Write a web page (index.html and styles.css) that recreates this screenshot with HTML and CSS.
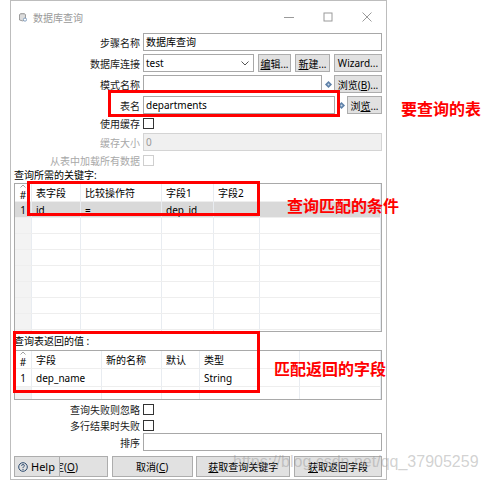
FILE: index.html
```html
<!DOCTYPE html>
<html>

<head>
    <meta http-equiv="Content-Type" content="text/html;charset=UTF-8" />
    <title>数据库查询</title>
    <link rel="stylesheet" href="styles.css">
</head>

<body>
    <div class="page">
        <div class="dialog">
            <div class="title_bar">
                <svg class="title_icon" width="8" height="9" viewBox="0 0 8 9">
                    <ellipse cx="3.5" cy="1.8" rx="3" ry="1.3" fill="#c9c9c9" stroke="#8a8a8a" stroke-width="0.8"/>
                    <path d="M0.5 1.8 V7 Q3.5 8.8 6.5 7 V1.8" fill="#dcdcdc" stroke="#8a8a8a" stroke-width="0.8"/>
                    <circle cx="6" cy="6.6" r="1.6" fill="#fff" stroke="#6f8fb5" stroke-width="0.8"/>
                </svg>
                <span class="title_text">数据库查询</span>
                <div class="win_btns">
                    <span class="win_btn"><svg width="10" height="10" viewBox="0 0 10 10"><path d="M0 5.5 H10" stroke="#9a9a9a" stroke-width="1"/></svg></span>
                    <span class="win_btn"><svg width="10" height="10" viewBox="0 0 10 10"><rect x="1" y="1" width="8" height="8" fill="none" stroke="#9a9a9a" stroke-width="1"/></svg></span>
                    <span class="win_btn"><svg width="10" height="10" viewBox="0 0 10 10"><path d="M0.5 0.5 L9.5 9.5 M9.5 0.5 L0.5 9.5" stroke="#9a9a9a" stroke-width="1"/></svg></span>
                </div>
            </div>

            <div class="dialog_body">
                <div class="form_row first">
                    <span class="label">步骤名称</span>
                    <div class="field"><div class="input">数据库查询</div></div>
                </div>
                <div class="form_row">
                    <span class="label">数据库连接</span>
                    <div class="field gap">
                        <div class="input select"><span>test</span>
                            <svg width="8" height="5" viewBox="0 0 8 5"><path d="M0.5 0.5 L4 4 L7.5 0.5" fill="none" stroke="#555" stroke-width="1"/></svg>
                        </div>
                        <button class="btn btn_edit"><u>编</u>辑...</button>
                        <button class="btn btn_new"><u>新</u>建...</button>
                        <button class="btn btn_wizard">Wizard...</button>
                    </div>
                </div>
                <div class="form_row">
                    <span class="label">模式名称</span>
                    <div class="field">
                        <div class="input"></div>
                        <span class="var_icon"><svg width="7" height="7" viewBox="0 0 7 7"><path d="M3.5 0 L7 3.5 L3.5 7 L0 3.5 Z" fill="#5d80a8"/><circle cx="3.5" cy="3.5" r="1" fill="#c9d8ea"/></svg></span>
                        <button class="btn btn_browse_b">浏览(<u>B</u>)...</button>
                    </div>
                </div>
                <div class="form_row">
                    <span class="label">表名</span>
                    <div class="field">
                        <div class="input">departments</div>
                        <span class="var_icon"><svg width="7" height="7" viewBox="0 0 7 7"><path d="M3.5 0 L7 3.5 L3.5 7 L0 3.5 Z" fill="#5d80a8"/><circle cx="3.5" cy="3.5" r="1" fill="#c9d8ea"/></svg></span>
                        <button class="btn btn_browse">浏<u>览</u>...</button>
                    </div>
                </div>
                <div class="check_row">
                    <span class="label">使用缓存</span>
                    <div class="field"><span class="checkbox"></span></div>
                </div>
                <div class="form_row">
                    <span class="label disabled">缓存大小</span>
                    <div class="field"><div class="input input_disabled">0</div></div>
                </div>
                <div class="check_row">
                    <span class="label disabled">从表中加载所有数据</span>
                    <div class="field"><span class="checkbox checkbox_disabled"></span></div>
                </div>

                <div class="section_title keys_title">查询所需的关键字:</div>
                <div class="grid_table keys_table">
                    <div class="grid_row head">
                        <div class="cell num"><svg class="sort_mark" width="6" height="4" viewBox="0 0 6 4"><path d="M0.5 3.5 L3 1 L5.5 3.5" fill="none" stroke="#8a8a8a" stroke-width="0.8"/></svg>#</div>
                        <div class="cell">表字段</div>
                        <div class="cell">比较操作符</div>
                        <div class="cell">字段1</div>
                        <div class="cell">字段2</div>
                        <div class="cell"></div>
                    </div>
                    <div class="grid_row selected">
                        <div class="cell num">1</div>
                        <div class="cell">id</div>
                        <div class="cell">=</div>
                        <div class="cell">dep_id</div>
                        <div class="cell"></div>
                        <div class="cell"></div>
                    </div>
                    <div class="grid_row"><div class="cell num"></div><div class="cell"></div><div class="cell"></div><div class="cell"></div><div class="cell"></div><div class="cell"></div></div>
                    <div class="grid_row"><div class="cell num"></div><div class="cell"></div><div class="cell"></div><div class="cell"></div><div class="cell"></div><div class="cell"></div></div>
                    <div class="grid_row"><div class="cell num"></div><div class="cell"></div><div class="cell"></div><div class="cell"></div><div class="cell"></div><div class="cell"></div></div>
                    <div class="grid_row"><div class="cell num"></div><div class="cell"></div><div class="cell"></div><div class="cell"></div><div class="cell"></div><div class="cell"></div></div>
                    <div class="grid_row"><div class="cell num"></div><div class="cell"></div><div class="cell"></div><div class="cell"></div><div class="cell"></div><div class="cell"></div></div>
                    <div class="grid_row"><div class="cell num"></div><div class="cell"></div><div class="cell"></div><div class="cell"></div><div class="cell"></div><div class="cell"></div></div>
                    <div class="grid_row"><div class="cell num"></div><div class="cell"></div><div class="cell"></div><div class="cell"></div><div class="cell"></div><div class="cell"></div></div>
                    <div class="grid_row"><div class="cell num"></div><div class="cell"></div><div class="cell"></div><div class="cell"></div><div class="cell"></div><div class="cell"></div></div>
                </div>

                <div class="section_title">查询表返回的值 :</div>
                <div class="grid_table return_table">
                    <div class="grid_row head">
                        <div class="cell num"><svg class="sort_mark" width="6" height="4" viewBox="0 0 6 4"><path d="M0.5 3.5 L3 1 L5.5 3.5" fill="none" stroke="#8a8a8a" stroke-width="0.8"/></svg>#</div>
                        <div class="cell">字段</div>
                        <div class="cell">新的名称</div>
                        <div class="cell">默认</div>
                        <div class="cell">类型</div>
                        <div class="cell"></div>
                    </div>
                    <div class="grid_row tall">
                        <div class="cell num">1</div>
                        <div class="cell">dep_name</div>
                        <div class="cell"></div>
                        <div class="cell"></div>
                        <div class="cell">String</div>
                        <div class="cell"></div>
                    </div>
                    <div class="grid_row"><div class="cell num"></div><div class="cell"></div><div class="cell"></div><div class="cell"></div><div class="cell"></div><div class="cell"></div></div>
                </div>

                <div class="check_row after_table">
                    <span class="label">查询失败则忽略</span>
                    <div class="field"><span class="checkbox"></span></div>
                </div>
                <div class="check_row">
                    <span class="label">多行结果时失败</span>
                    <div class="field"><span class="checkbox"></span></div>
                </div>
                <div class="form_row sort_row">
                    <span class="label">排序</span>
                    <div class="field"><div class="input"></div></div>
                </div>

                <div class="button_bar">
                    <button class="btn btn_ok">确定(<u>O</u>)</button>
                    <button class="btn btn_cancel">取消(<u>C</u>)</button>
                    <button class="btn btn_keys"><u>获</u>取查询关键字</button>
                    <button class="btn btn_fields"><u>获</u>取返回字段</button>
                    <button class="btn btn_help">
                        <svg width="10" height="10" viewBox="0 0 10 10"><circle cx="5" cy="5" r="4.3" fill="none" stroke="#2b4a6f" stroke-width="1"/><path d="M3.6 3.9 Q3.6 2.5 5 2.5 Q6.4 2.5 6.4 3.8 Q6.4 4.6 5.4 5 Q5 5.2 5 6" fill="none" stroke="#2b4a6f" stroke-width="0.9"/><circle cx="5" cy="7.4" r="0.55" fill="#2b4a6f"/></svg>
                        Help
                    </button>
                </div>
            </div>
        </div>

        <div class="mark mark_table_name"></div>
        <div class="mark mark_keys"></div>
        <div class="mark mark_return"></div>
        <div class="note note_table">要查询的表</div>
        <div class="note note_keys">查询匹配的条件</div>
        <div class="note note_return">匹配返回的字段</div>
        <div class="watermark">https://blog.csdn.net/qq_37905259</div>
    </div>
</body>

</html>
```

FILE: styles.css
```css
* {
    margin: 0;
    padding: 0;
    box-sizing: border-box;
}

html {
    background: #fff;
}

body {
    font-family: "Noto Sans", "Noto Sans CJK SC", sans-serif;
    font-size: 10px;
    color: #000;
}

.page {
    position: relative;
    width: 488px;
    height: 480px;
    overflow: hidden;
}

.dialog {
    margin-left: 10px;
    width: 377px;
    height: 480px;
    border: 1px solid #bdbdbd;
    background: #fff;
    display: flex;
    flex-direction: column;
}

/* 标题栏 */
.title_bar {
    height: 32px;
    display: flex;
    align-items: center;
    padding-left: 8px;
}

.title_icon {
    margin-right: 6px;
}

.title_text {
    color: #9a9a9a;
}

.win_btns {
    margin-left: auto;
    display: flex;
    height: 100%;
}

.win_btn {
    width: 39px;
    display: flex;
    align-items: center;
    justify-content: center;
}

/* 表单 */
.dialog_body {
    padding: 0 4px 0 3px;
    display: flex;
    flex-direction: column;
}

.form_row,
.check_row {
    display: grid;
    grid-template-columns: 126px 1fr;
    column-gap: 3px;
    align-items: center;
}

.form_row {
    height: 18px;
    margin-top: 3px;
}

.form_row.first {
    margin-top: 0;
}

.check_row {
    height: 14px;
    margin-top: 2px;
}

.check_row.after_table {
    margin-top: 2px;
}

.form_row.sort_row {
    margin-top: 1px;
}

.label {
    text-align: right;
    white-space: nowrap;
    color: #1a1a1a;
}

.label.disabled {
    color: #a8a8a8;
}

.field {
    display: flex;
    align-items: center;
    height: 100%;
}

.field.gap {
    gap: 4px;
}

.input {
    flex: 1;
    height: 18px;
    border: 1px solid #a8a8a8;
    background: #fff;
    padding: 0 2px;
    line-height: 16px;
    white-space: nowrap;
    overflow: hidden;
}

.input_disabled {
    background: #f0f0f0;
    border-color: #d4d4d4;
    color: #9a9a9a;
}

.select {
    display: flex;
    align-items: center;
    justify-content: space-between;
    padding-right: 4px;
}

.var_icon {
    width: 12px;
    display: flex;
    align-items: center;
    justify-content: center;
}

.checkbox {
    width: 11px;
    height: 11px;
    border: 1px solid #333;
    background: #fff;
}

.checkbox_disabled {
    border-color: #cfcfcf;
}

.btn {
    font: inherit;
    height: 18px;
    border: 1px solid #adadad;
    background: #e1e1e1;
    color: #000;
    white-space: nowrap;
}

.btn u {
    text-underline-offset: 1px;
}

.btn_edit {
    width: 33px;
}

.btn_new {
    width: 35px;
}

.btn_wizard {
    width: 48px;
}

.btn_browse_b {
    width: 48px;
}

.btn_browse {
    width: 35px;
}

/* 表格 */
.section_title {
    height: 18px;
    line-height: 18px;
    white-space: nowrap;
}

.keys_title {
    height: 16px;
    line-height: 16px;
}

.grid_table {
    border: 1px solid #a9a9a9;
    overflow: hidden;
    background: #fff;
}

.keys_table {
    height: 149px;
}

.return_table {
    height: 50px;
}

.grid_row {
    display: grid;
    height: 16px;
    border-bottom: 1px solid #eeeeee;
}

.keys_table .grid_row {
    grid-template-columns: 17px 49px 81px 52px 46px 1fr;
}

.return_table .grid_row {
    grid-template-columns: 17px 70px 60px 38px 100px 1fr;
}

.grid_row.head {
    height: 18px;
}

.grid_row.tall {
    height: 18px;
}

.grid_row.selected {
    background: #d9d9d9;
}

.cell {
    border-right: 1px solid #e8ecf1;
    padding-left: 4px;
    display: flex;
    align-items: center;
    white-space: nowrap;
    overflow: hidden;
}

.cell.num {
    padding-left: 0;
    justify-content: center;
    background: #f3f3f3;
}

.grid_row.head .cell.num,
.grid_row.selected .cell.num,
.grid_row.tall .cell.num {
    background: transparent;
}

.grid_row.head .cell.num {
    position: relative;
    padding-top: 4px;
}

.sort_mark {
    position: absolute;
    top: 0;
    left: 5px;
}

/* 底部按钮 */
.button_bar {
    position: relative;
    margin-top: 5px;
    height: 21px;
    display: flex;
    justify-content: space-between;
}

.button_bar .btn {
    height: 21px;
}

.btn_ok {
    width: 94px;
}

.btn_cancel {
    width: 81px;
}

.btn_keys {
    width: 94px;
}

.btn_fields {
    width: 88px;
}

.btn_help {
    position: absolute;
    left: 0;
    top: 0;
    width: 46px;
    display: flex;
    align-items: center;
    gap: 3px;
    padding-left: 3px;
    font-size: 11px;
}

/* 标注 */
.mark {
    position: absolute;
    border: 3px solid #f00;
}

.mark_table_name {
    left: 108px;
    top: 90px;
    width: 232px;
    height: 27px;
}

.mark_keys {
    left: 27px;
    top: 181px;
    width: 233px;
    height: 35px;
}

.mark_return {
    left: 13px;
    top: 331px;
    width: 247px;
    height: 62px;
}

.note {
    position: absolute;
    font-family: "Noto Sans CJK SC", sans-serif;
    font-size: 16px;
    font-weight: bold;
    line-height: 20px;
    color: #f00;
    white-space: nowrap;
}

.note_table {
    left: 401px;
    top: 98px;
}

.note_keys {
    left: 287px;
    top: 195px;
}

.note_return {
    left: 274px;
    top: 358px;
}

.watermark {
    position: absolute;
    left: 233px;
    top: 453px;
    font-family: "Liberation Sans", sans-serif;
    font-size: 16px;
    line-height: 18px;
    color: rgba(140, 140, 140, 0.4);
    white-space: nowrap;
}
```
